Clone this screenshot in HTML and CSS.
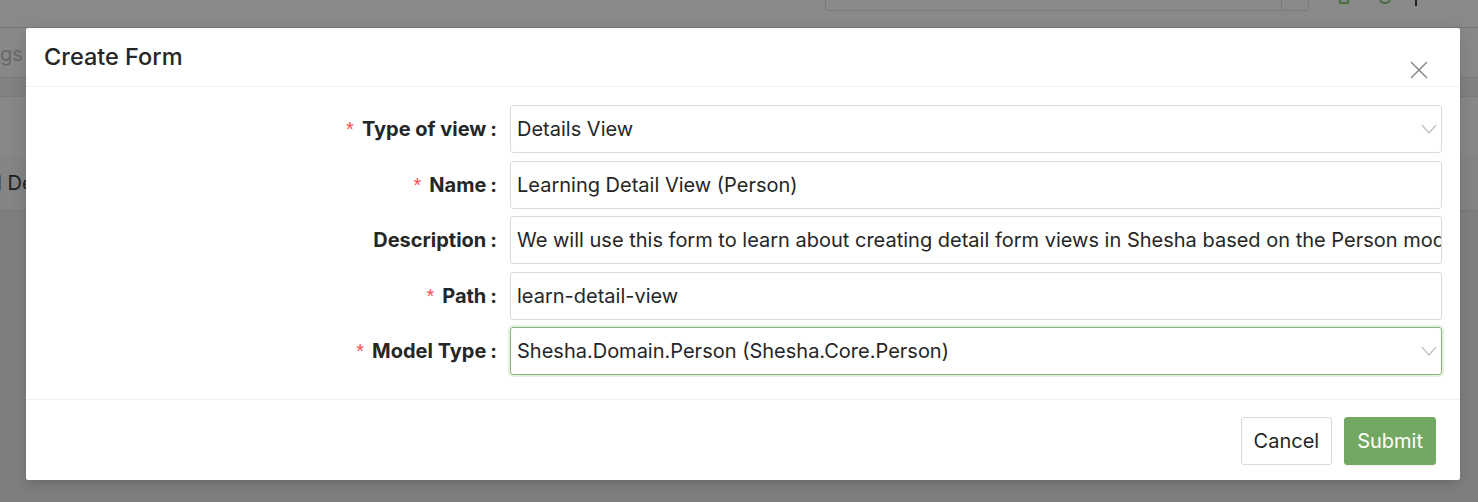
FILE: index.html
```html
<!DOCTYPE html>
<html lang="en">
<head>
<meta charset="utf-8">
<title>Create Form</title>
<link rel="stylesheet" href="styles.css">
</head>
<body>
<div class="page">
  <div class="topbar">
    <div class="search">
      <span class="search-text">learn</span>
      <span class="search-btn"></span>
    </div>
    <span class="top-icon"></span>
    <span class="top-icon ring"></span>
    <span class="top-dot"></span>
  </div>
  <div class="subbar"><span class="sub-text">gs</span></div>
  <div class="stripe"></div>
  <div class="gapband"></div>
  <div class="tablerow"><span class="row-text">l De</span></div>
  <div class="rest"></div>
</div>

<div class="modal" role="dialog">
  <div class="modal-header">
    <h2 class="modal-title">Create Form</h2>
    <button class="close" aria-label="Close">
      <svg width="18" height="18" viewBox="0 0 18 18"><path d="M1 1 L17 17 M17 1 L1 17" stroke="#8c8c8c" stroke-width="1.6" fill="none"/></svg>
    </button>
  </div>
  <div class="modal-body">
    <div class="form-row">
      <label class="label"><span class="req">*</span>Type of view<span class="colon">:</span></label>
      <div class="control select"><span class="value">Details View</span>
        <svg class="chev" width="16" height="10" viewBox="0 0 16 10"><path d="M1 1 L8 9 L15 1" stroke="#c0c0c0" stroke-width="1.2" fill="none"/></svg>
      </div>
    </div>
    <div class="form-row">
      <label class="label"><span class="req">*</span>Name<span class="colon">:</span></label>
      <div class="control"><span class="value">Learning Detail View (Person)</span></div>
    </div>
    <div class="form-row">
      <label class="label">Description<span class="colon">:</span></label>
      <div class="control"><span class="value">We will use this form to learn about creating detail form views in Shesha based on the Person model</span></div>
    </div>
    <div class="form-row">
      <label class="label"><span class="req">*</span>Path<span class="colon">:</span></label>
      <div class="control"><span class="value">learn-detail-view</span></div>
    </div>
    <div class="form-row">
      <label class="label"><span class="req">*</span>Model Type<span class="colon">:</span></label>
      <div class="control select focused"><span class="value">Shesha.Domain.Person (Shesha.Core.Person)</span>
        <svg class="chev" width="16" height="10" viewBox="0 0 16 10"><path d="M1 1 L8 9 L15 1" stroke="#c0c0c0" stroke-width="1.2" fill="none"/></svg>
      </div>
    </div>
  </div>
  <div class="modal-footer">
    <button class="btn">Cancel</button>
    <button class="btn primary">Submit</button>
  </div>
</div>
</body>
</html>
```
FILE: styles.css
```css
* { box-sizing: border-box; }
html, body { margin: 0; padding: 0; }
body {
  font-family: Inter, "Liberation Sans", Arial, sans-serif;
  background: #7e7f81;
  width: 1478px;
  height: 502px;
  overflow: hidden;
}
.page { display: flex; flex-direction: column; height: 502px; }
.topbar {
  height: 28px;
  background: #898989;
  border-bottom: 1px solid #767676;
  display: flex;
  align-items: flex-start;
  padding-left: 825px;
}
.search {
  width: 484px;
  height: 36px;
  margin-top: -25px;
  border: 1px solid #7a7a7a;
  border-radius: 3px;
  display: flex;
  align-items: flex-end;
  position: relative;
}
.search-text { font-size: 18px; color: #1e1e1e; padding-left: 12px; line-height: 18px; margin-bottom: 13px; }
.search-btn { position: absolute; right: 0; top: 0; bottom: 0; width: 27px; border-left: 1px solid #7a7a7a; }
.top-icon { width: 10px; height: 5px; margin-left: 30px; margin-top: -1px; border: 2px solid #4a6f3f; border-top: none; }
.top-icon.ring { width: 12px; margin-left: 30px; border-radius: 0 0 5px 5px; }
.top-dot { width: 2px; height: 6px; background: #222; margin-left: 24px; }
.subbar { height: 49px; background: #888888; display: flex; align-items: center; }
.sub-text { font-size: 20px; color: #686868; margin-left: 0px; margin-top: 2px; }
.stripe { height: 20px; background: #818181; border-top: 1px solid #7a7a7a; border-bottom: 1px solid #7a7a7a; }
.gapband { height: 58px; background: #878787; }
.tablerow { height: 57px; background: #848484; border-bottom: 2px solid #7a7a7a; display: flex; align-items: center; }
.row-text { font-size: 20px; color: #1e1e1e; margin-left: -3px; }
.rest { flex: 1; background: #7e7f81; }

.modal {
  position: absolute;
  left: 26px;
  top: 28px;
  width: 1434px;
  height: 452px;
  background: #fff;
  border-radius: 2px;
  box-shadow: 0 6px 16px rgba(0,0,0,0.12), 0 3px 6px -4px rgba(0,0,0,0.18);
  display: flex;
  flex-direction: column;
}
.modal-header {
  height: 59px;
  border-bottom: 1px solid #f0f0f0;
  display: flex;
  align-items: center;
  padding: 0 18px;
  position: relative;
}
.modal-title {
  margin: 0;
  font-size: 23.5px;
  font-weight: 500;
  color: #262626;
  margin-top: -1px;
}
.close {
  position: absolute;
  right: 32px;
  top: 33px;
  width: 18px;
  height: 18px;
  padding: 0;
  border: none;
  background: none;
  display: flex;
}
.modal-body {
  padding: 18px 18px 24px 0;
  display: flex;
  flex-direction: column;
  gap: 7.5px;
  border-bottom: 1px solid #f0f0f0;
}
.form-row { display: flex; align-items: center; height: 48px; }
.label {
  width: 484px;
  padding-right: 13px;
  text-align: right;
  font-size: 20px;
  font-weight: 700;
  color: #262626;
  white-space: nowrap;
}
.req { color: #ff4d4f; font-weight: 400; font-size: 20px; margin-right: 8px; font-family: "Liberation Sans", sans-serif; }
.colon { margin-left: 4px; }
.control {
  flex: 1;
  height: 48px;
  border: 1px solid #d9d9d9;
  border-radius: 3px;
  display: flex;
  align-items: center;
  padding: 0 12px 0 6px;
  overflow: hidden;
  position: relative;
}
.value { font-size: 20px; color: #262626; white-space: nowrap; }
.chev { position: absolute; right: 4px; top: 18px; }
.control.focused {
  border-color: #86b776;
  box-shadow: 0 0 0 2px rgba(114, 168, 98, 0.18);
}
.modal-footer {
  flex: 1;
  display: flex;
  justify-content: flex-end;
  align-items: flex-start;
  padding: 17px 24px 0 0;
  gap: 12px;
}
.btn {
  height: 48px;
  padding: 0 12px;
  font-family: inherit;
  font-size: 20px;
  color: #262626;
  background: #fff;
  border: 1px solid #d9d9d9;
  border-radius: 3px;
}
.btn.primary {
  background: #72a862;
  border-color: #72a862;
  color: #fff;
  box-shadow: 0 2px 0 rgba(0,0,0,0.04);
}
```
